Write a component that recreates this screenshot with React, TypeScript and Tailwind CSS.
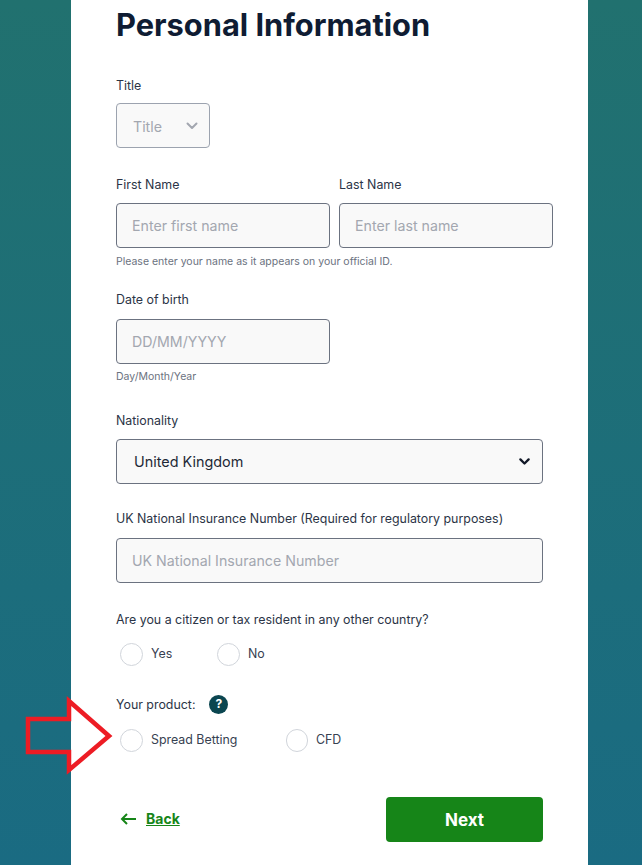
function Label({ children }: { children: React.ReactNode }) {
  return <label className="block h-5 pt-px text-[12.4px] leading-5 text-[#2b3446]">{children}</label>;
}

function Chevron({ className }: { className: string }) {
  return (
    <svg viewBox="0 0 12 8" fill="none" strokeLinecap="round" strokeLinejoin="round" className={className}>
      <path d="M1.5 1.500 6 6l4.500-4.500" />
    </svg>
  );
}

function TextField({ placeholder, width }: { placeholder: string; width: string }) {
  return (
    <div className={`flex h-[45px] items-center rounded border border-[#6b7280] bg-[#f9f9f9] px-[15px] text-[14.2px] text-[#a3a7b0] ${width}`}>
      {placeholder}
    </div>
  );
}

function Radio({ label, width, size }: { label: string; width: string; size: string }) {
  return (
    <div className={`flex items-center ${width}`}>
      <span className={`mr-[3px] ml-1 shrink-0 rounded-full border border-[#d1d5db] bg-white ${size}`} />
      <span className="ml-[5px] text-[12.4px] text-[#374151]">{label}</span>
    </div>
  );
}

export default function App() {
  return (
    <div className="relative h-[865px] overflow-hidden bg-gradient-to-b from-[#21716f] to-[#1a6b82] [font-family:Inter,sans-serif]">
      <div className="ml-[71px] h-full w-[517px] bg-white pl-[45px]">
        <h1 className="h-[50px] text-[30.800px] leading-[50px] font-bold text-[#0f1c33]">Personal Information</h1>

        <div className="mt-[25px]">
          <Label>Title</Label>
          <div className="mt-2 flex h-[45px] w-[94px] items-center justify-between rounded border border-[#9ca3af] bg-[#f9f9f9] pr-[11px] pl-4 text-[14.2px] text-[#a3a7b0]">
            <span className="pt-0.5">Title</span>
            <Chevron className="w-3 stroke-[#a3a7b0] stroke-2" />
          </div>
        </div>

        <div className="mt-[26px] flex gap-[9px]">
          <div>
            <Label>First Name</Label>
            <div className="mt-[9px]">
              <TextField placeholder="Enter first name" width="w-[214px]" />
            </div>
          </div>
          <div>
            <Label>Last Name</Label>
            <div className="mt-[9px]">
              <TextField placeholder="Enter last name" width="w-[214px]" />
            </div>
          </div>
        </div>
        <p className="mt-[7px] h-[14px] text-[10.5px] leading-[14px] text-[#6b7280]">Please enter your name as it appears on your official ID.</p>

        <div className="mt-[20px]">
          <Label>Date of birth</Label>
          <div className="mt-[10px]">
            <TextField placeholder="DD/MM/YYYY" width="w-[214px]" />
          </div>
        </div>
        <p className="mt-[6px] h-[14px] text-[10.5px] leading-[14px] text-[#6b7280]">Day/Month/Year</p>

        <div className="mt-[26px]">
          <Label>Nationality</Label>
          <div className="mt-[9px] flex h-[45px] w-[427px] items-center justify-between rounded border border-[#6b7280] bg-[#f9f9f9] pr-[12px] pl-[17px] text-[14.4px] text-[#1f2937]">
            United Kingdom
            <Chevron className="w-[11px] stroke-[#111827] stroke-[2.5]" />
          </div>
        </div>

        <div className="mt-[24px]">
          <Label>UK National Insurance Number (Required for regulatory purposes)</Label>
          <div className="mt-[10px]">
            <TextField placeholder="UK National Insurance Number" width="w-[427px]" />
          </div>
        </div>

        <div className="mt-[26px]">
          <Label>Are you a citizen or tax resident in any other country?</Label>
          <div className="mt-[13px] flex h-[24px]">
            <Radio label="Yes" width="w-[97px]" size="h-[23px] w-[23px]" />
            <Radio label="No" width="w-[80px]" size="h-[23px] w-[23px]" />
          </div>
        </div>

        <div className="mt-[28px] flex h-5 items-center">
          <Label>Your product:</Label>
          <span className="ml-[14px] flex h-[19px] w-[19px] items-center justify-center rounded-full bg-[#0b4650] text-[12px] font-bold text-white">?</span>
        </div>
        <div className="mt-[14px] flex h-[24px]">
          <Radio label="Spread Betting" width="w-[166px]" size="h-[23px] w-[23px]" />
          <Radio label="CFD" width="w-[80px]" size="h-[23px] w-[22px]" />
        </div>

        <div className="mt-[45px] flex w-[427px] items-center justify-between">
          <a className="ml-1 flex items-center pb-0.5 text-[14px] font-bold text-[#168518] underline">
            <svg viewBox="0 0 16 12" fill="none" stroke="#168518" strokeWidth="2" className="mr-[10px] w-4">
              <path d="M16 6H2M7 1 2 6l5 5" />
            </svg>
            Back
          </a>
          <button className="h-[45px] w-[157px] rounded bg-[#168518] pt-0.5 text-[17px] font-bold text-white">Next</button>
        </div>
      </div>

      <svg viewBox="0 0 642 865" className="absolute inset-0 h-[865px] w-[642px]" fill="none">
        <path d="M28 719H69V701L109 736 69 770V752H28Z" stroke="#ed1c24" strokeWidth="4.500" />
      </svg>
    </div>
  );
}
